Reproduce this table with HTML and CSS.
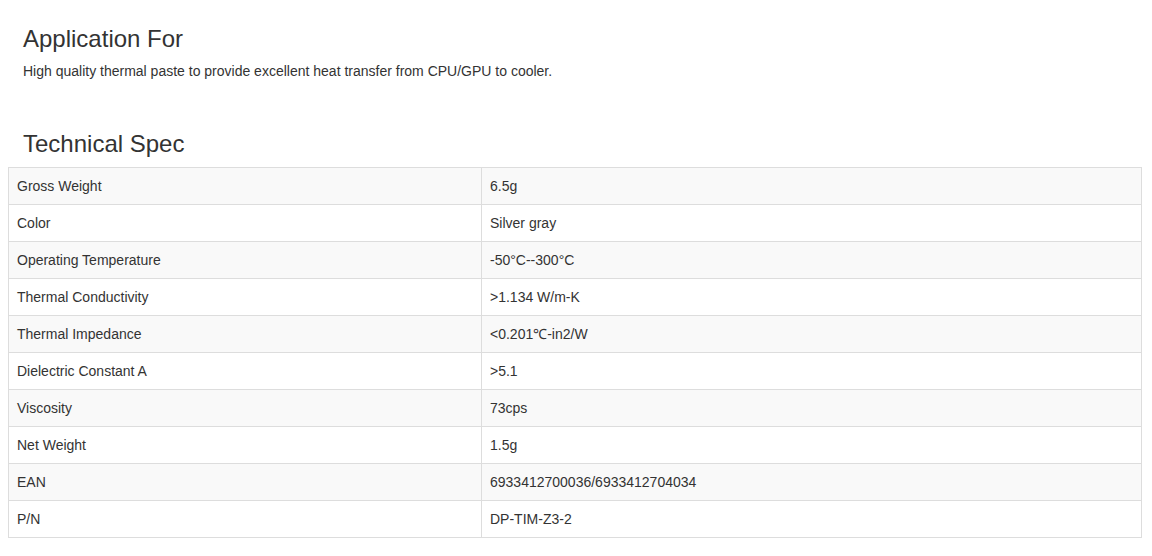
FILE: index.html
```html
<!DOCTYPE html>
<html>
<head>
<meta charset="utf-8">
<link rel="stylesheet" href="styles.css">
</head>
<body>
<div class="page">
  <section class="block">
    <h3 class="title">Application For</h3>
    <p class="desc">High quality thermal paste to provide excellent heat transfer from CPU/GPU to cooler.</p>
  </section>
  <section class="block spec">
    <h3 class="title">Technical Spec</h3>
    <table class="spec-table">
      <tbody>
        <tr><td class="key">Gross Weight</td><td>6.5g</td></tr>
        <tr><td class="key">Color</td><td>Silver gray</td></tr>
        <tr><td class="key">Operating Temperature</td><td>-50°C--300°C</td></tr>
        <tr><td class="key">Thermal Conductivity</td><td>&gt;1.134 W/m-K</td></tr>
        <tr><td class="key">Thermal Impedance</td><td>&lt;0.201℃-in2/W</td></tr>
        <tr><td class="key">Dielectric Constant A</td><td>&gt;5.1</td></tr>
        <tr><td class="key">Viscosity</td><td>73cps</td></tr>
        <tr><td class="key">Net Weight</td><td>1.5g</td></tr>
        <tr><td class="key">EAN</td><td>6933412700036/6933412704034</td></tr>
        <tr><td class="key">P/N</td><td>DP-TIM-Z3-2</td></tr>
      </tbody>
    </table>
  </section>
</div>
</body>
</html>
```

FILE: styles.css
```css
* { box-sizing: border-box; }
html, body { margin: 0; padding: 0; background: #fff; }
body {
  font-family: "Liberation Sans", Arial, Helvetica, sans-serif;
  font-size: 14px;
  line-height: 1.42857;
  color: #333;
}
.page {
  width: 1150px;
  padding: 26px 8px 0 8px;
}
.title {
  margin: 0 0 9px 0;
  padding: 0 15px;
  font-size: 24px;
  font-weight: 400;
  line-height: 1.1;
  color: #333;
}
.desc {
  margin: 0;
  padding: 0 15px;
  font-size: 14px;
  line-height: 20px;
}
.spec { margin-top: 50px; }
.spec .title { margin-bottom: 9px; }
.spec-table {
  width: 1134px;
  border-collapse: collapse;
  border: 1px solid #ddd;
}
.spec-table td {
  border: 1px solid #ddd;
  padding: 8px;
  height: 37px;
  line-height: 20px;
  font-size: 14px;
  vertical-align: top;
}
.spec-table td.key { width: 473px; }
.spec-table tr:nth-child(odd) td { background: #f9f9f9; }
```
